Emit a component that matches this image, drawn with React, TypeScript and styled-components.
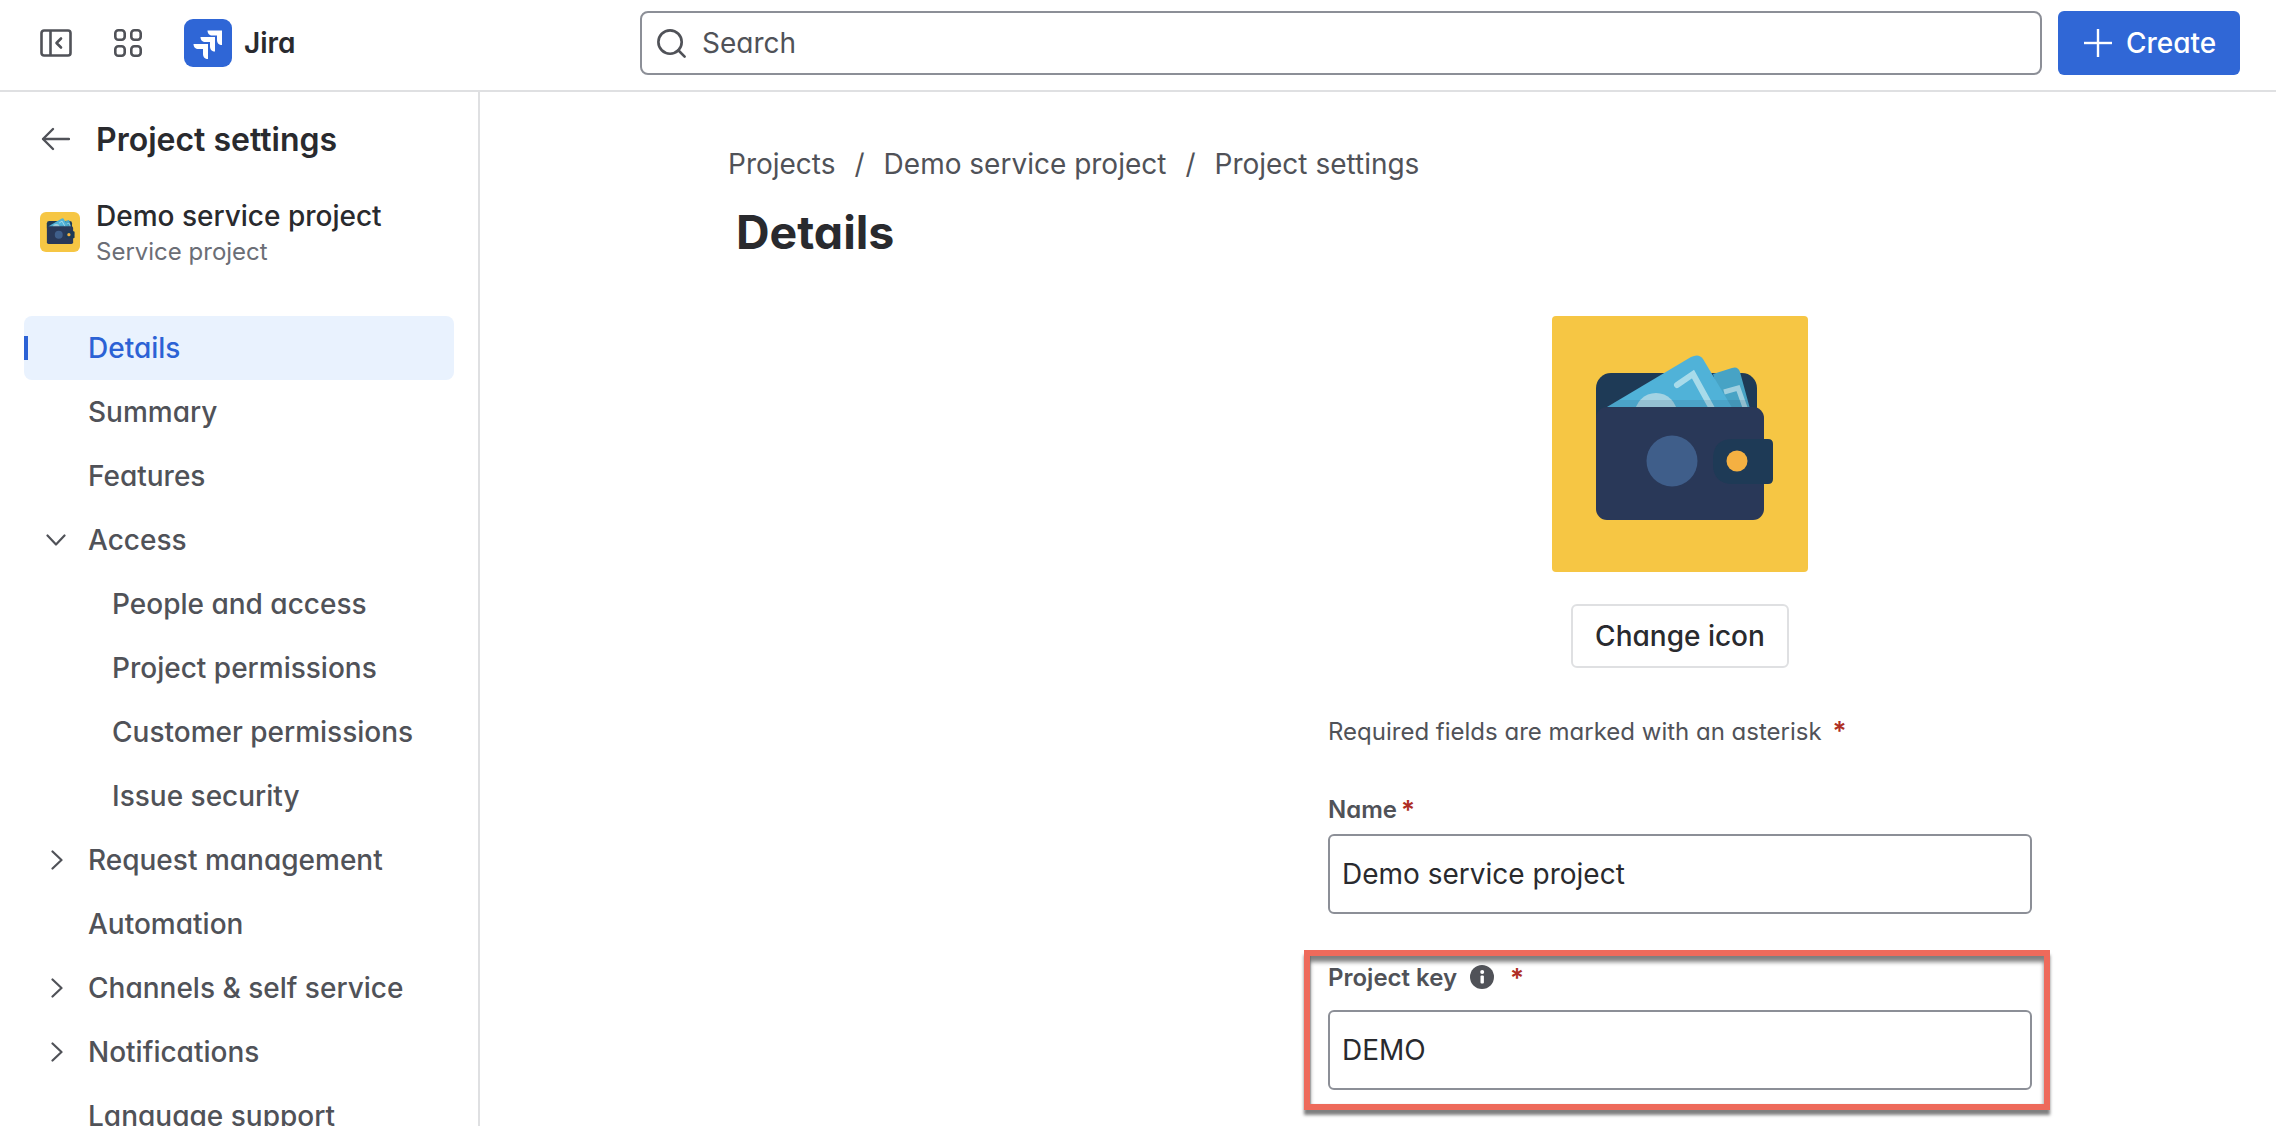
import React from "react";
import styled, { createGlobalStyle } from "styled-components";
import { Search } from "lucide-react";

const Global = createGlobalStyle`
  html, body { margin: 0; padding: 0; height: 100%; background: #fff; overflow: hidden; }
  body { font-family: Inter, "Noto Sans", "Liberation Sans", sans-serif; color: #292a2e; font-feature-settings: "cv11" 1; }
  * { box-sizing: border-box; }
`;

const Page = styled.div`
  position: relative;
  width: 2276px;
  height: 1126px;
  overflow: hidden;
  display: flex;
  flex-direction: column;
`;

const TopBar = styled.header`
  height: 92px;
  flex: none;
  display: flex;
  align-items: center;
  border-bottom: 2px solid #dfe0e2;
  padding: 0 36px 4px 40px;
`;

const IconButton = styled.div`
  width: 32px;
  height: 32px;
  display: flex;
  align-items: center;
  justify-content: center;
  color: #505258;
  margin-right: 40px;
`;

const Brand = styled.div`
  display: flex;
  align-items: center;
  gap: 12px;
  width: 456px;
  flex: none;
`;

const BrandName = styled.span`
  font-size: 28px;
  font-weight: 600;
  color: #292a2e;
`;

const SearchBox = styled.div`
  flex: 1;
  height: 64px;
  border: 2px solid #8c8f97;
  border-radius: 8px;
  display: flex;
  align-items: center;
  gap: 13px;
  padding: 0 12px;
  color: #505258;
  font-size: 28px;
`;

const CreateButton = styled.div`
  margin-left: 16px;
  width: 182px;
  height: 64px;
  flex: none;
  border-radius: 6px;
  background: #3067d6;
  color: #fff;
  font-size: 28px;
  font-weight: 500;
  display: flex;
  align-items: center;
  padding-left: 26px;
  gap: 14px;
`;

const Body = styled.div`
  flex: 1;
  min-height: 0;
  display: flex;
`;

const Sidebar = styled.aside`
  width: 480px;
  flex: none;
  border-right: 2px solid #dfe0e2;
  padding: 23px 24px 0;
  overflow: hidden;
`;

const BackRow = styled.div`
  height: 48px;
  display: flex;
  align-items: center;
  gap: 26px;
  padding-left: 14px;
  color: #505258;
`;

const SidebarTitle = styled.h2`
  margin: 0;
  font-size: 32px;
  font-weight: 600;
  color: #292a2e;
`;

const ProjectRow = styled.div`
  margin-top: 33px;
  height: 72px;
  display: flex;
  align-items: center;
  gap: 16px;
  padding-left: 16px;
`;

const ProjectText = styled.div`
  display: flex;
  flex-direction: column;
  gap: 3px;
`;

const ProjectName = styled.div`
  font-size: 28px;
  line-height: 36px;
  font-weight: 500;
  color: #292a2e;
`;

const ProjectType = styled.div`
  font-size: 24px;
  line-height: 30px;
  color: #6b6e76;
`;

const Nav = styled.nav`
  margin-top: 48px;
  display: flex;
  flex-direction: column;
`;

const NavItem = styled.div<{ $active?: boolean; $sub?: boolean }>`
  position: relative;
  height: 64px;
  flex: none;
  display: flex;
  align-items: center;
  padding-left: ${(p) => (p.$sub ? 88 : 64)}px;
  border-radius: 8px;
  font-size: 28px;
  font-weight: 500;
  color: ${(p) => (p.$active ? "#2c62d5" : "#505258")};
  background: ${(p) => (p.$active ? "#e9f2fe" : "transparent")};
  &::before {
    content: "";
    display: ${(p) => (p.$active ? "block" : "none")};
    position: absolute;
    left: 0;
    top: 20px;
    width: 4px;
    height: 24px;
    background: #2c62d5;
  }
`;

const Caret = styled.span`
  position: absolute;
  left: 18px;
  top: 18px;
  width: 28px;
  height: 28px;
  display: flex;
  align-items: center;
  justify-content: center;
  color: #505258;
`;

const Main = styled.main`
  flex: 1;
  min-width: 0;
  padding: 52px 0 0 248px;
  overflow: hidden;
`;

const Crumbs = styled.div`
  height: 40px;
  display: flex;
  align-items: center;
  gap: 19px;
  font-size: 28px;
  color: #505258;
`;

const PageTitle = styled.h1`
  margin: 20px 0 0 8px;
  font-size: 46.5px;
  line-height: 56px;
  font-weight: 700;
  color: #292a2e;
`;

const Form = styled.div`
  width: 704px;
  margin: 56px 0 0 600px;
  display: flex;
  flex-direction: column;
`;

const Center = styled.div`
  display: flex;
  flex-direction: column;
  align-items: center;
`;

const BigIcon = styled.div`
  width: 256px;
  height: 256px;
  border-radius: 4px;
  overflow: hidden;
`;

const SmallIcon = styled.div`
  width: 40px;
  height: 40px;
  flex: none;
  border-radius: 6px;
  overflow: hidden;
`;

const ChangeButton = styled.div`
  margin-top: 32px;
  width: 218px;
  height: 64px;
  border: 2px solid #dfe0e2;
  border-radius: 6px;
  display: flex;
  align-items: center;
  justify-content: center;
  font-size: 28px;
  font-weight: 500;
  color: #292a2e;
`;

const Hint = styled.div`
  margin-top: 48px;
  height: 30px;
  font-size: 24px;
  line-height: 30px;
  color: #505258;
`;

const Star = styled.span`
  color: #ae2e24;
  font-size: 26px;
  font-weight: 600;
`;

const KeyStar = styled(Star)`
  margin-left: 12px;
`;

const HintStar = styled(Star)`
  margin-left: 4px;
`;

const Label = styled.div<{ $top: number }>`
  margin-top: ${(p) => p.$top}px;
  height: 30px;
  display: flex;
  align-items: center;
  gap: 4px;
  font-size: 24px;
  font-weight: 600;
  color: #505258;
`;

const InfoSlot = styled.span`
  display: flex;
  margin-left: 9px;
`;

const Field = styled.div<{ $gap: number }>`
  margin-top: ${(p) => p.$gap}px;
  height: 80px;
  border: 2px solid #8c8f97;
  border-radius: 6px;
  display: flex;
  align-items: center;
  padding: 0 12px;
  font-size: 28px;
  color: #292a2e;
`;

const Highlight = styled.div`
  position: absolute;
  left: 1304px;
  top: 950px;
  width: 746px;
  height: 160px;
  border: 6px solid #ee6a5b;
  box-shadow: 0 5px 3px rgba(60, 60, 60, 0.65), inset 0 6px 4px rgba(60, 60, 60, 0.65), inset 1px 0 1px rgba(60, 60, 60, 0.3);
  pointer-events: none;
`;

const Wallet = () => (
  <svg viewBox="0 0 256 256" width="100%" height="100%">
    <rect width="256" height="256" fill="#f6c644" />
    <path d="M44 74 V100 H70 V91 Z" fill="#2f5286" />
    <rect x="44" y="57" width="161" height="60" rx="15" fill="#1e3a56" />
    <path d="M161 58 L180 52 Q186 50 188 56 L200 100 H172 Z" fill="#47a3c5" />
    <path d="M172 76 L186 72 L196 100" fill="none" stroke="#9fcfdf" strokeWidth="5" />
    <path d="M55 91 L139 41 Q147 37 151 43 L185 100 H55 Z" fill="#50b2d8" />
    <path d="M125 69 L141 58 L164 100" fill="none" stroke="#a8dbea" strokeWidth="6" strokeLinecap="round" />
    <circle cx="104" cy="98.3" r="21.3" fill="#a3d3e3" />
    <path d="M67 84 H200 V91 H55 Z" fill="#293858" opacity="0.12" />
    <rect x="44" y="91" width="168" height="113" rx="11" fill="#293858" />
    <circle cx="120" cy="145" r="25.5" fill="#3f5e8a" />
    <path d="M181 123 H216 Q221 123 221 128 V163 Q221 168 216 168 H181 Q161 168 161 148 V143 Q161 123 181 123 Z" fill="#1e3a56" />
    <circle cx="185" cy="145" r="10.5" fill="#f4b042" />
  </svg>
);

const JiraLogo = () => (
  <svg width="48" height="48" viewBox="0 0 48 48">
    <rect width="48" height="48" rx="9" fill="#2f66d6" />
    <path d="M23.5 11.5 H38 V26 C35 26 33 24 33 21 V16.5 H28.5 C25.5 16.5 23.5 14.5 23.5 11.5 Z" fill="#fff" />
    <path d="M16.5 18 H31 V32.5 C28 32.5 26 30.5 26 27.5 V23 H21.5 C18.5 23 16.5 21 16.5 18 Z" fill="#fff" />
    <path d="M9.5 25 H24 V40 C21 40 19 38 19 35 V30 H14.5 C11.5 30 9.5 28 9.5 25 Z" fill="#fff" />
  </svg>
);

const CollapseIcon = () => (
  <svg width="32" height="28" viewBox="0 0 32 28" fill="none" stroke="currentColor" strokeWidth="2.6">
    <rect x="1.5" y="1.5" width="29" height="25" rx="2.5" />
    <path d="M10.5 1.5 V26.5" />
    <path d="M21 9.5 L16.5 14 L21 18.5" strokeLinecap="round" strokeLinejoin="round" />
  </svg>
);

const AppsIcon = () => (
  <svg width="28" height="28" viewBox="0 0 28 28" fill="none" stroke="currentColor" strokeWidth="2.6">
    <rect x="1.3" y="1.3" width="9.4" height="9.4" rx="3" />
    <rect x="17.3" y="1.3" width="9.4" height="9.4" rx="3" />
    <rect x="1.3" y="17.3" width="9.4" height="9.4" rx="3" />
    <rect x="17.3" y="17.3" width="9.4" height="9.4" rx="3" />
  </svg>
);

const BackArrow = () => (
  <svg width="32" height="32" viewBox="0 0 32 32" fill="none" stroke="currentColor" strokeWidth="2.4" strokeLinecap="round" strokeLinejoin="round">
    <path d="M31 16 H5.5" />
    <path d="M15 6 L5 16 L15 26" />
  </svg>
);

const PlusIcon = () => (
  <svg width="28" height="28" viewBox="0 0 28 28" fill="none" stroke="currentColor" strokeWidth="2.4">
    <path d="M0 14 H28" />
    <path d="M14 0 V28" />
  </svg>
);

const CaretDown = () => (
  <svg width="20" height="12" viewBox="0 0 20 12" fill="none" stroke="currentColor" strokeWidth="2.2" strokeLinecap="round" strokeLinejoin="round">
    <path d="M1.5 1.5 L10 10.5 L18.5 1.5" />
  </svg>
);

const CaretRight = () => (
  <svg width="14" height="20" viewBox="0 0 14 20" fill="none" stroke="currentColor" strokeWidth="2.2" strokeLinecap="round" strokeLinejoin="round">
    <path d="M3.5 1.5 L12.5 10 L3.5 18.5" />
  </svg>
);

const InfoIcon = () => (
  <svg width="24" height="24" viewBox="0 0 24 24">
    <circle cx="12" cy="12" r="12" fill="#505258" />
    <rect x="10.5" y="10.5" width="3.4" height="8" rx="1" fill="#fff" />
    <circle cx="12.2" cy="7" r="2" fill="#fff" />
  </svg>
);

type Item = { label: string; active?: boolean; sub?: boolean; caret?: "open" | "closed" };

const items: Item[] = [
  { label: "Details", active: true },
  { label: "Summary" },
  { label: "Features" },
  { label: "Access", caret: "open" },
  { label: "People and access", sub: true },
  { label: "Project permissions", sub: true },
  { label: "Customer permissions", sub: true },
  { label: "Issue security", sub: true },
  { label: "Request management", caret: "closed" },
  { label: "Automation" },
  { label: "Channels & self service", caret: "closed" },
  { label: "Notifications", caret: "closed" },
  { label: "Language support" },
];

export default function App() {
  return (
    <Page>
      <Global />
      <TopBar>
        <IconButton><CollapseIcon /></IconButton>
        <IconButton><AppsIcon /></IconButton>
        <Brand>
          <JiraLogo />
          <BrandName>Jira</BrandName>
        </Brand>
        <SearchBox>
          <Search size={35} strokeWidth={1.8} />
          <span>Search</span>
        </SearchBox>
        <CreateButton>
          <PlusIcon />
          <span>Create</span>
        </CreateButton>
      </TopBar>
      <Body>
        <Sidebar>
          <BackRow>
            <BackArrow />
            <SidebarTitle>Project settings</SidebarTitle>
          </BackRow>
          <ProjectRow>
            <SmallIcon><Wallet /></SmallIcon>
            <ProjectText>
              <ProjectName>Demo service project</ProjectName>
              <ProjectType>Service project</ProjectType>
            </ProjectText>
          </ProjectRow>
          <Nav>
            {items.map((it) => (
              <NavItem key={it.label} $active={it.active} $sub={it.sub}>
                {it.caret && (
                  <Caret>{it.caret === "open" ? <CaretDown /> : <CaretRight />}</Caret>
                )}
                {it.label}
              </NavItem>
            ))}
          </Nav>
        </Sidebar>
        <Main>
          <Crumbs>
            <span>Projects</span><span>/</span>
            <span>Demo service project</span><span>/</span>
            <span>Project settings</span>
          </Crumbs>
          <PageTitle>Details</PageTitle>
          <Form>
            <Center>
              <BigIcon><Wallet /></BigIcon>
              <ChangeButton>Change icon</ChangeButton>
            </Center>
            <Hint>Required fields are marked with an asterisk <HintStar>*</HintStar></Hint>
            <Label $top={48}>Name<Star>*</Star></Label>
            <Field $gap={10}>Demo service project</Field>
            <Label $top={48}>Project key<InfoSlot><InfoIcon /></InfoSlot><KeyStar>*</KeyStar></Label>
            <Field $gap={18}>DEMO</Field>
          </Form>
        </Main>
      </Body>
      <Highlight />
    </Page>
  );
}
